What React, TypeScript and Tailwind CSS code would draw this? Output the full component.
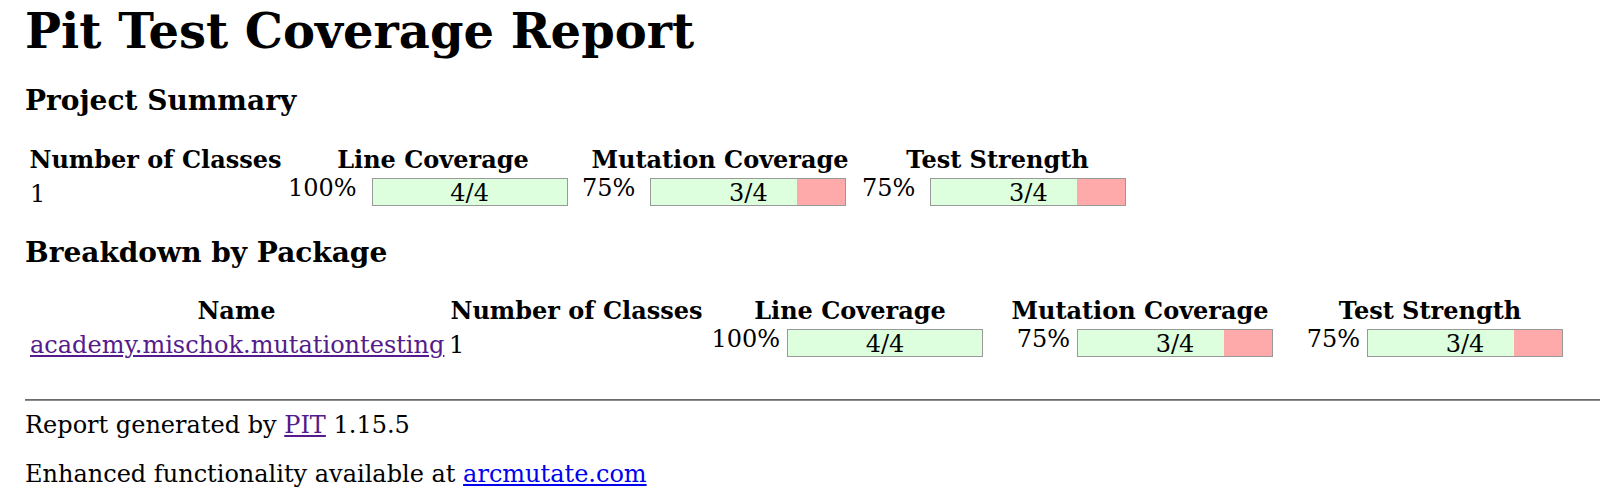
import React from "react";

function Bar({ pct, legend, ml }: { pct: number; legend: string; ml: string }) {
  return (
    <div className={`relative mt-[2px] h-[28px] w-[196px] shrink-0 border border-[#999] bg-[#faa] ${ml}`}>
      <div className="h-full bg-[#dfd]" style={{ width: `${pct}%` }} />
      <div className="absolute inset-0 pt-[2px] text-center leading-none">{legend}</div>
    </div>
  );
}

function CovA({ pct, legend }: { pct: number; legend: string }) {
  return (
    <div className="flex items-start pl-[2px]">
      <span className="leading-none">{pct}%</span>
      <Bar pct={pct} legend={legend} ml="ml-[15px]" />
    </div>
  );
}

function CovB({ pct, legend }: { pct: number; legend: string }) {
  return (
    <div className="flex items-start pl-[3px]">
      <span className="w-[72px] shrink-0 text-right leading-none">{pct}%</span>
      <Bar pct={pct} legend={legend} ml="ml-[7px]" />
    </div>
  );
}

function Th({ children }: { children: React.ReactNode }) {
  return <div className="whitespace-nowrap text-center font-bold leading-none">{children}</div>;
}

export default function App() {
  return (
    <div className="min-h-[503px] bg-white pl-[25px] pt-[7px] font-['DejaVu_Serif',serif] text-[24px] text-black">
      <h1 className="text-[48px] font-bold leading-none">Pit Test Coverage Report</h1>
      <h3 className="mt-[32px] text-[28px] font-bold leading-none">Project Summary</h3>

      <div className="mt-[33px] grid grid-cols-[261px_294px_280px_275px] items-start gap-y-[4px]">
        <Th>Number of Classes</Th>
        <Th>Line Coverage</Th>
        <Th>Mutation Coverage</Th>
        <Th>Test Strength</Th>
        <div className="pl-[5px] pt-[6px] leading-none">1</div>
        <CovA pct={100} legend="4/4" />
        <CovA pct={75} legend="3/4" />
        <CovA pct={75} legend="3/4" />
      </div>

      <h3 className="mt-[33px] text-[28px] font-bold leading-none">Breakdown by Package</h3>

      <div className="mt-[32px] grid grid-cols-[423px_257px_290px_290px_290px] items-start gap-y-[4px]">
        <Th>Name</Th>
        <Th>Number of Classes</Th>
        <Th>Line Coverage</Th>
        <Th>Mutation Coverage</Th>
        <Th>Test Strength</Th>
        <div className="pl-[5px] pt-[6px] leading-none">
          <a href="#" className="text-[#551a8b] underline">academy.mischok.mutationtesting</a>
        </div>
        <div className="pl-[1px] pt-[6px] leading-none">1</div>
        <CovB pct={100} legend="4/4" />
        <CovB pct={75} legend="3/4" />
        <CovB pct={75} legend="3/4" />
      </div>

      <hr className="mt-[42px] h-0 border-t border-b border-t-[#6b6b6b] border-b-[#8c8c8c]" />
      <p className="mt-[12px] leading-none">
        Report generated by <a href="#" className="text-[#551a8b] underline">PIT</a> 1.15.5
      </p>
      <p className="mt-[25px] leading-none">
        Enhanced functionality available at{" "}
        <a href="#" className="text-[#0000ee] underline">arcmutate.com</a>
      </p>
    </div>
  );
}
